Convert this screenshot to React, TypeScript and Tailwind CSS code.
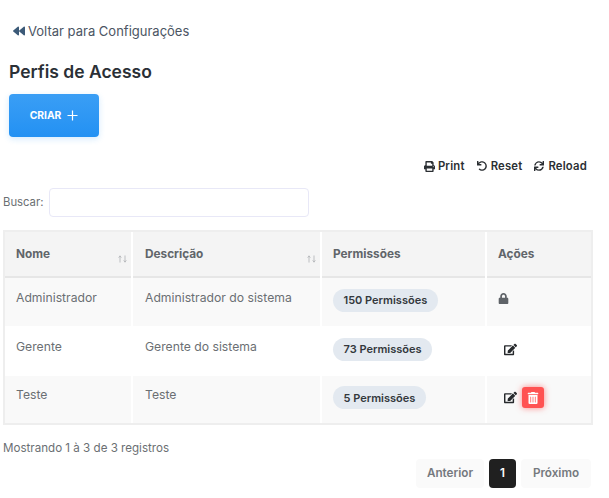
import React from 'react';
import { FaBackward, FaEdit, FaLock, FaPrint, FaSync, FaTrashAlt, FaUndo } from 'react-icons/fa';

const rows = [
    { name: 'Administrador', desc: 'Administrador do sistema', perms: '150 Permissões', kind: 'locked', h: 'h-[48px]', bg: 'bg-[#f9f9f9]' },
    { name: 'Gerente', desc: 'Gerente do sistema', perms: '73 Permissões', kind: 'edit', h: 'h-[50px]', bg: 'bg-white' },
    { name: 'Teste', desc: 'Teste', perms: '5 Permissões', kind: 'both', h: 'h-[47px]', bg: 'bg-[#f9f9f9]' },
];

function SortArrows() {
    return (
        <svg width="9" height="8" viewBox="0 0 9 8" fill="none" stroke="#b5b8bb" strokeWidth="0.9" className="absolute right-[4px] bottom-[13px]">
            <path d="M2 7.5V1M0.7 2.6L2 0.8L3.3 2.6M7 0.5V7M5.7 5.4L7 7.2L8.3 5.4" />
        </svg>
    );
}

export default function App() {
    return (
        <div className="h-[498px] w-[609px] overflow-hidden bg-white font-['Inter',sans-serif] text-[#6b6f73]">
            <div className="flex items-center gap-[3px] pl-[13px] pt-[22px] text-[13px] leading-[18px] text-[#4b5563]">
                <FaBackward className="text-[12px] text-[#3c5a78]" />
                <span>Voltar para Configurações</span>
            </div>
            <h1 className="mt-[21px] pl-[9px] text-[17.5px] leading-[22px] font-semibold text-[#2b3036]">Perfis de Acesso</h1>
            <button className="ml-[9px] mt-[11px] flex h-[43px] w-[90px] items-center justify-center gap-[6px] rounded-[4px] bg-gradient-to-b from-[#3a9ef5] to-[#2291f3] text-[10.3px] font-bold text-white shadow-[0_2px_6px_rgba(33,150,243,0.2)]">
                CRIAR
                <svg width="11" height="11" viewBox="0 0 11 11" className="stroke-white" strokeWidth="1.2">
                    <path d="M5.5 0.5v10M0.5 5.5h10" />
                </svg>
            </button>

            <div className="mt-[21px] flex justify-end gap-[12px] pr-[22px] text-[11.3px] leading-[16px] font-semibold tracking-[0.2px] text-[#2b2f33]">
                <span className="flex items-center gap-[3px]"><FaPrint className="text-[11px]" />Print</span>
                <span className="flex items-center gap-[4px]"><FaUndo className="text-[10px]" />Reset</span>
                <span className="flex items-center gap-[4px]"><FaSync className="text-[10px]" />Reload</span>
            </div>

            <div className="mt-[14px] flex items-center gap-[6px] pl-[3px] text-[11.3px]">
                <label>Buscar:</label>
                <input className="h-[29px] w-[260px] rounded-[4px] border border-[#e8e8f7] bg-white" />
            </div>

            <div className="ml-[3px] mt-[13px] w-[590px] border-2 border-[#eeeeee]">
                <table className="-mx-[2px] w-[590px] table-fixed border-separate border-spacing-x-[2px] border-spacing-y-0 text-[12.2px]">
                    <colgroup>
                        <col className="w-[126px]" />
                        <col className="w-[187px]" />
                        <col className="w-[163px]" />
                        <col />
                    </colgroup>
                    <thead>
                        <tr className="h-[46px] bg-[#f4f4f4] text-left text-[11.8px] font-bold text-[#61656a]">
                            <th className="relative border-b-2 border-[#e6e6e6] pl-[11px] pt-[2px] font-bold">Nome<SortArrows /></th>
                            <th className="relative border-b-2 border-[#e6e6e6] pl-[12px] pt-[2px] font-bold">Descrição<SortArrows /></th>
                            <th className="border-b-2 border-[#e6e6e6] pl-[11px] pt-[2px] font-bold">Permissões</th>
                            <th className="border-b-2 border-[#e6e6e6] pl-[11px] pt-[2px] font-bold">Ações</th>
                        </tr>
                    </thead>
                    <tbody>
                        {rows.map((row) => (
                            <tr key={row.name} className={`${row.h} ${row.bg}`}>
                                <td className="pb-[8px] pl-[11px] align-middle">{row.name}</td>
                                <td className="pb-[8px] pl-[12px] align-middle">{row.desc}</td>
                                <td className="pb-[4px] pl-[11px] align-middle">
                                    <span className="inline-block rounded-full bg-[#e3e9f0] px-[10.5px] py-[3.5px] text-[11px] leading-[16px] font-semibold text-[#33383d]">{row.perms}</span>
                                </td>
                                <td className="pb-[4px] pl-[11px] align-middle">
                                    {row.kind === 'locked' && <FaLock className="mb-[4px] text-[11px] text-[#5f6368]" />}
                                    {row.kind !== 'locked' && (
                                        <div className="flex items-center gap-[5px] pl-[6px]">
                                            <FaEdit className="text-[13px] text-[#26292c]" />
                                            {row.kind === 'both' && (
                                                <span className="flex h-[21px] w-[22px] items-center justify-center rounded-[3px] bg-[#ff5252] text-white shadow-[0_0_6px_rgba(255,82,82,0.7)]">
                                                    <FaTrashAlt className="text-[12px]" />
                                                </span>
                                            )}
                                        </div>
                                    )}
                                </td>
                            </tr>
                        ))}
                    </tbody>
                </table>
            </div>

            <div className="mt-[15px] pl-[3px] text-[11.6px] leading-[16px]">Mostrando 1 à 3 de 3 registros</div>
            <div className="mt-[3px] flex justify-end gap-[5px] pr-[18px] text-[11.7px] font-semibold text-[#75797e]">
                <span className="flex h-[29px] w-[68px] items-center justify-center rounded-[4px] bg-[#fafafa]">Anterior</span>
                <span className="flex h-[29px] w-[27px] items-center justify-center rounded-[4px] bg-[#202020] text-white">1</span>
                <span className="flex h-[29px] w-[70px] items-center justify-center rounded-[4px] bg-[#fafafa]">Próximo</span>
            </div>
        </div>
    );
}
